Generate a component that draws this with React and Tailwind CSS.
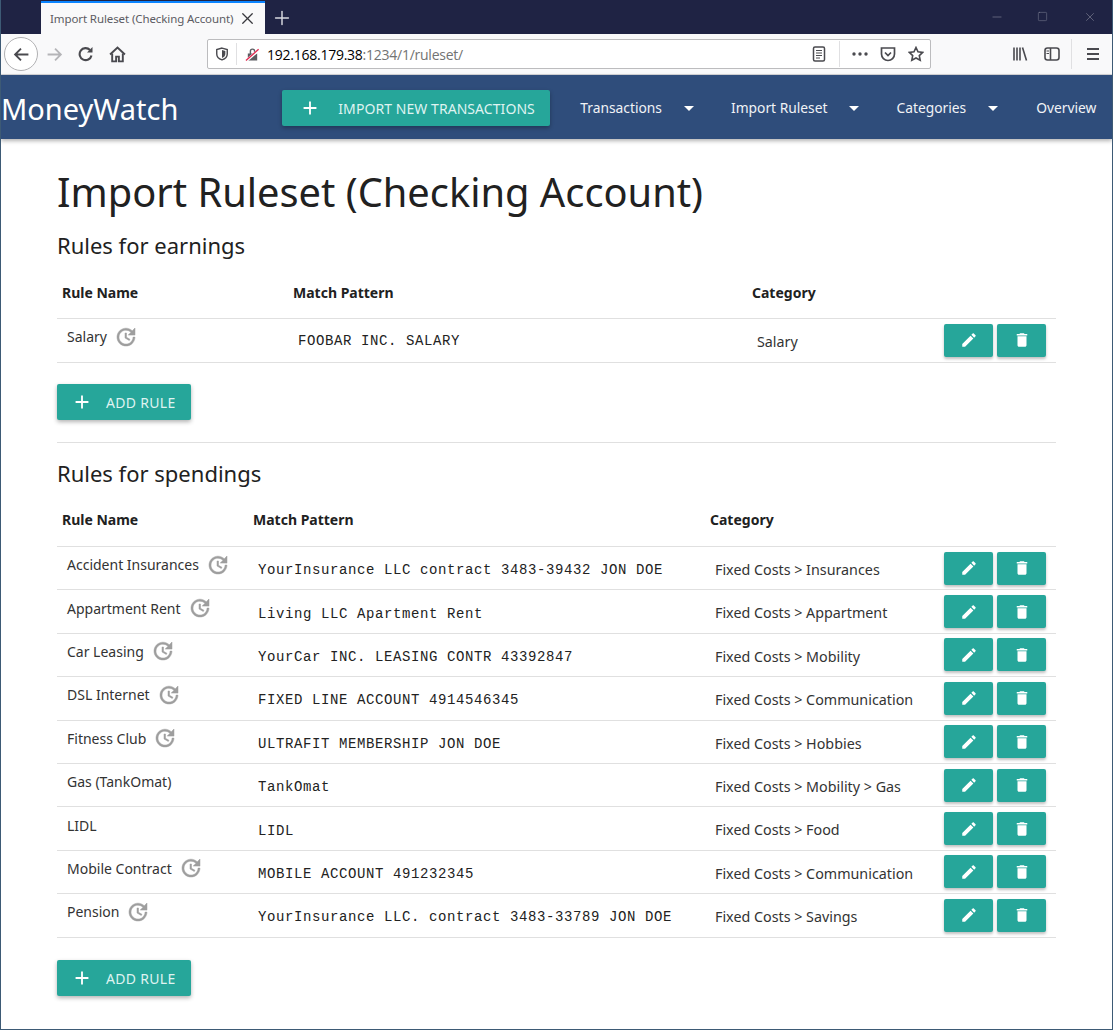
import { Plus, X, Minus, Square } from 'lucide-react';

const earnings = [{ name: 'Salary', recurring: true, pattern: 'FOOBAR INC. SALARY', category: 'Salary' }];

const spendings = [
  { name: 'Accident Insurances', recurring: true, pattern: 'YourInsurance LLC contract 3483-39432 JON DOE', category: 'Fixed Costs > Insurances' },
  { name: 'Appartment Rent', recurring: true, pattern: 'Living LLC Apartment Rent', category: 'Fixed Costs > Appartment' },
  { name: 'Car Leasing', recurring: true, pattern: 'YourCar INC. LEASING CONTR 43392847', category: 'Fixed Costs > Mobility' },
  { name: 'DSL Internet', recurring: true, pattern: 'FIXED LINE ACCOUNT 4914546345', category: 'Fixed Costs > Communication' },
  { name: 'Fitness Club', recurring: true, pattern: 'ULTRAFIT MEMBERSHIP JON DOE', category: 'Fixed Costs > Hobbies' },
  { name: 'Gas (TankOmat)', recurring: false, pattern: 'TankOmat', category: 'Fixed Costs > Mobility > Gas' },
  { name: 'LIDL', recurring: false, pattern: 'LIDL', category: 'Fixed Costs > Food' },
  { name: 'Mobile Contract', recurring: true, pattern: 'MOBILE ACCOUNT 491232345', category: 'Fixed Costs > Communication' },
  { name: 'Pension', recurring: true, pattern: 'YourInsurance LLC. contract 3483-33789 JON DOE', category: 'Fixed Costs > Savings' },
];

function MaterialIcon({ d, className }) {
  return (
    <svg viewBox="0 0 24 24" className={className} fill="currentColor">
      <path d={d} />
    </svg>
  );
}

const ICON_UPDATE = 'M21 10.12h-6.78l2.74-2.82c-2.73-2.7-7.15-2.8-9.88-.1-2.73 2.71-2.73 7.08 0 9.79s7.15 2.71 9.88 0C18.32 15.65 19 14.08 19 12.1h2c0 1.98-.88 4.55-2.64 6.29-3.51 3.48-9.21 3.48-12.72 0-3.5-3.47-3.53-9.11-.02-12.58s9.14-3.47 12.65 0L21 3v7.12zM12.5 8v4.25l3.5 2.08-.72 1.21L11 13V8h1.5z';
const ICON_EDIT = 'M3 17.25V21h3.75L17.81 9.94l-3.75-3.75L3 17.25zM20.71 7.04c.39-.39.39-1.02 0-1.41l-2.34-2.34c-.39-.39-1.02-.39-1.41 0l-1.83 1.83 3.75 3.75 1.83-1.83z';
const ICON_DELETE = 'M6 19c0 1.1.9 2 2 2h8c1.1 0 2-.9 2-2V7H6v12zM19 4h-3.5l-1-1h-5l-1 1H5v2h14V4z';
const ICON_ADD = 'M19 13h-6v6h-2v-6H5v-2h6V5h2v6h6v2z';

function BrowserChrome() {
  return (
    <div className="shrink-0">
      {/* Title bar with tab */}
      <div className="flex h-[34px] bg-[#1f2344] pt-px text-[#d8d9e0]">
        <div className="ml-[40px] flex h-[33px] w-[224px] items-center border-t-2 border-[#0a84ff] bg-[#f9f9fa] pl-[9px] text-[11.5px] text-[#5c5c63]">
          <span className="w-[188px] overflow-hidden whitespace-nowrap tracking-[-0.1px]">Import Ruleset (Checking Account)</span>
          <X className="h-[19px] w-[19px] text-[#38383d]" strokeWidth={1.6} />
        </div>
        <Plus className="ml-[6px] mt-[6px] h-[22px] w-[22px]" strokeWidth={1.6} />
        <div className="ml-auto flex items-start text-[#8b8d9e]">
          <Minus className="mt-[9px] h-[14px] w-[14px]" strokeWidth={1} />
          <Square className="ml-[33px] mt-[10px] h-[11px] w-[11px]" strokeWidth={1} />
          <X className="ml-[35px] mr-[15px] mt-[9px] h-[14px] w-[14px]" strokeWidth={1} />
        </div>
      </div>
      {/* Toolbar */}
      <div className="flex h-[41px] items-center border-b border-[#d6d6d8] bg-[#f9f9fa] text-[#4a4a4f]">
        <div className="ml-[3px] flex h-[34px] w-[34px] items-center justify-center rounded-full border border-[#b1b1b3] bg-white">
          <svg viewBox="0 0 16 16" className="h-[17px] w-[17px]" fill="none" stroke="currentColor" strokeWidth="1.8">
            <path d="M14.5 8H2M7.5 2.5 2 8l5.5 5.5" />
          </svg>
        </div>
        <svg viewBox="0 0 16 16" className="ml-[8px] h-[17px] w-[17px] text-[#b5b5b8]" fill="none" stroke="currentColor" strokeWidth="1.7">
          <path d="M1.5 8H14M8.5 2.5 14 8l-5.5 5.5" />
        </svg>
        <svg viewBox="0 0 16 16" className="ml-[15px] h-[16px] w-[16px]" fill="none" stroke="currentColor" strokeWidth="2.1">
          <path d="M13.5 9.5A6 6 0 1 1 12 4" />
          <path d="M14.5 1v5.5H9z" fill="currentColor" stroke="none" />
        </svg>
        <svg viewBox="0 0 16 16" className="ml-[15px] h-[17px] w-[17px]" fill="none" stroke="currentColor" strokeWidth="1.8">
          <path d="M1 8 8 1.5 15 8" />
          <path d="M3 7v7.5h3.7V10h2.6v4.5H13V7" />
        </svg>
        {/* URL bar */}
        <div className="ml-[81px] flex h-[30px] w-[724px] items-center rounded-[2px] border border-[#bcbcbe] bg-white">
          <svg viewBox="0 0 16 16" className="ml-[7px] h-[14px] w-[14px]" fill="none" stroke="currentColor" strokeWidth="1.6">
            <path d="M8 1.2 14 3v5c0 3.4-2.6 5.7-6 6.8C4.6 13.7 2 11.4 2 8V3z" />
            <path d="M8 3.5 11.8 4.5V8c0 2.2-1.7 3.7-3.8 4.5z" fill="currentColor" stroke="none" />
          </svg>
          <div className="ml-[7px] h-[22px] w-px bg-[#e0e0e2]" />
          <svg viewBox="0 0 16 16" className="ml-[8px] h-[15px] w-[15px]">
            <path d="M3 7h10v7.5H3zM5 7V4.5a3 3 0 0 1 6 0V7H9.5V4.5a1.5 1.5 0 0 0-3 0V7z" fill="#5b5b60" />
            <path d="M1 15 15 3" stroke="#fff" strokeWidth="3" />
            <path d="M1 14.5 14.5 2.5" stroke="#e22850" strokeWidth="1.5" />
          </svg>
          <span className="ml-[7px] font-['Open_Sans',sans-serif] text-[14px] tracking-[-0.25px] text-black">
            192.168.179.38<span className="text-[#737373]">:1234/1/ruleset/</span>
          </span>
          <div className="ml-auto flex items-center">
            <svg viewBox="0 0 16 16" className="h-[16px] w-[16px]" fill="none" stroke="currentColor" strokeWidth="1.5">
              <rect x="2.5" y="1" width="11" height="14" rx="1.5" />
              <path d="M5 4.5h6M5 7h6M5 9.5h6M5 12h4" strokeWidth="1.2" />
            </svg>
            <div className="ml-[12px] h-[26px] w-px bg-[#e0e0e2]" />
            <svg viewBox="0 0 16 4" className="ml-[12px] h-[4px] w-[16px]" fill="currentColor">
              <circle cx="2" cy="2" r="1.7" /><circle cx="8" cy="2" r="1.7" /><circle cx="14" cy="2" r="1.7" />
            </svg>
            <svg viewBox="0 0 16 16" className="ml-[12px] h-[16px] w-[16px]" fill="none" stroke="currentColor" strokeWidth="1.7">
              <path d="M1.5 2h13v6a6.5 6.5 0 0 1-13 0z" />
              <path d="m5 6.5 3 3 3-3" />
            </svg>
            <svg viewBox="0 0 16 16" className="ml-[12px] mr-[6px] h-[16px] w-[16px]" fill="none" stroke="currentColor" strokeWidth="1.6">
              <path d="m8 1.5 2 4.3 4.7.6-3.4 3.2.9 4.7L8 12l-4.2 2.3.9-4.7L1.3 6.4 6 5.8z" />
            </svg>
          </div>
        </div>
        <svg viewBox="0 0 16 16" className="ml-[81px] h-[16px] w-[16px]" fill="none" stroke="currentColor" strokeWidth="1.6">
          <path d="M2 1.5v13M5 1.5v13M8 1.5v13M10.5 1.5l4 13" />
        </svg>
        <svg viewBox="0 0 16 16" className="ml-[16px] h-[16px] w-[16px]" fill="none" stroke="currentColor" strokeWidth="1.6">
          <rect x="1" y="2" width="14" height="12" rx="2.5" />
          <path d="M6.5 2v12" />
          <path d="M2.5 5h2.5M2.5 7.5h2.5" strokeWidth="1" />
        </svg>
        <div className="ml-[11px] h-[30px] w-px bg-[#e0e0e2]" />
        <svg viewBox="0 0 16 16" className="ml-[13px] h-[16px] w-[16px]" fill="none" stroke="currentColor" strokeWidth="1.8">
          <path d="M2 3h12M2 8h12M2 13h12" />
        </svg>
      </div>
    </div>
  );
}

function NavLink({ label, dropdown, className }) {
  return (
    <a className={`flex items-center text-[13.8px] text-[#f1f3f6] ${className}`}>
      {label}
      {dropdown && <span className="ml-[22px] h-0 w-0 border-x-[5px] border-t-[5px] border-x-transparent border-t-white" />}
    </a>
  );
}

function AddButton({ label, labelClass, className }) {
  return (
    <button className={`flex items-center rounded-[2px] bg-[#26a69a] text-[14px] text-[#dff3f1] shadow-[0_2px_4px_rgba(0,0,0,0.3)] ${className}`}>
      <MaterialIcon d={ICON_ADD} className="h-[22px] w-[22px] text-white" />
      <span className={labelClass}>{label}</span>
    </button>
  );
}

function IconButton({ d }) {
  return (
    <button className="flex h-[33px] w-[49px] items-center justify-center rounded-[2px] bg-[#26a69a] text-white shadow-[0_2px_3px_rgba(0,0,0,0.25)]">
      <MaterialIcon d={d} className="h-[18px] w-[18px]" />
    </button>
  );
}

function RuleTable({ rules, nameWidth, patternWidth, headClass, headCellClass, patternClass, rowClass }) {
  return (
    <table className="w-full table-fixed border-collapse">
      <colgroup>
        <col style={{ width: nameWidth }} />
        <col style={{ width: patternWidth }} />
        <col />
        <col className="w-[120px]" />
      </colgroup>
      <thead>
        <tr className={`border-b border-[#e0e0e0] text-left text-[14px] font-bold text-[#212121] ${headClass}`}>
          <th className={`pl-[5px] font-bold ${headCellClass}`}>Rule Name</th>
          <th className={`pl-[5px] font-bold ${headCellClass}`}>Match Pattern</th>
          <th className={`pl-[5px] font-bold ${headCellClass}`}>Category</th>
          <th />
        </tr>
      </thead>
      <tbody>
        {rules.map((rule) => (
          <tr key={rule.name} className={`border-b border-[#e0e0e0] ${rowClass}`}>
            <td className="pb-[7px] pl-[10px] align-middle">
              <div className="flex items-center text-[14px] text-[#333]">
                {rule.name}
                {rule.recurring && <MaterialIcon d={ICON_UPDATE} className="ml-[7px] h-[24px] w-[24px] stroke-[#9e9e9e] stroke-[0.5px] text-[#9e9e9e]" />}
              </div>
            </td>
            <td className={`pl-[10px] align-middle font-['Liberation_Mono',monospace] text-[14px] tracking-[0.6px] text-[#222] whitespace-nowrap ${patternClass}`}>{rule.pattern}</td>
            <td className="pl-[10px] pt-[3px] align-middle text-[14.3px] text-[#333] whitespace-nowrap">{rule.category}</td>
            <td className="align-middle">
              <div className="flex justify-end gap-[4px] pr-[10px]">
                <IconButton d={ICON_EDIT} />
                <IconButton d={ICON_DELETE} />
              </div>
            </td>
          </tr>
        ))}
      </tbody>
    </table>
  );
}

export default function App() {
  return (
    <div className="flex h-[1030px] flex-col overflow-hidden border-x border-b border-[#3d5a75] bg-white font-['Noto_Sans',sans-serif] text-[#212121]">
      <BrowserChrome />

      <nav className="flex h-[64px] shrink-0 items-center bg-[#2f4d7b] pt-[2px] shadow-[0_2px_4px_rgba(0,0,0,0.3)]">
        <span className="mt-[2px] text-[29px] text-white">MoneyWatch</span>
        <AddButton label="IMPORT NEW TRANSACTIONS" labelClass="ml-[17px] tracking-[0.06px]" className="ml-[104px] h-[36px] w-[268px] pl-[17px]" />
        <NavLink label="Transactions" dropdown className="ml-[30px]" />
        <NavLink label="Import Ruleset" dropdown className="ml-[37px]" />
        <NavLink label="Categories" dropdown className="ml-[37px]" />
        <NavLink label="Overview" className="ml-[38px]" />
      </nav>

      <main className="px-[56px] pt-[25px]">
        <h1 className="text-[39.8px] leading-[56px] text-[#212121]">Import Ruleset (Checking Account)</h1>
        <h2 className="mt-[10px] text-[22px] leading-[30px]">Rules for earnings</h2>
        <RuleTable rules={earnings} nameWidth="231px" patternWidth="459px" headClass="h-[58px]" headCellClass="pt-[8px]" patternClass="pt-[3px]" rowClass="h-[44px]" />
        <AddButton label="ADD RULE" labelClass="ml-[13px] pt-[2px] tracking-[0.3px]" className="mt-[21px] h-[36px] w-[134px] pl-[14px]" />
        <hr className="mt-[22px] border-[#e0e0e0]" />
        <h2 className="mt-[15px] text-[22px] leading-[30px]">Rules for spendings</h2>
        <RuleTable rules={spendings} nameWidth="191px" patternWidth="457px" headClass="h-[59px]" headCellClass="pt-[6px]" patternClass="pt-[5px]" rowClass="h-[43.4px]" />
        <AddButton label="ADD RULE" labelClass="ml-[13px] pt-[2px] tracking-[0.3px]" className="mt-[22px] h-[36px] w-[134px] pl-[14px]" />
      </main>
    </div>
  );
}
